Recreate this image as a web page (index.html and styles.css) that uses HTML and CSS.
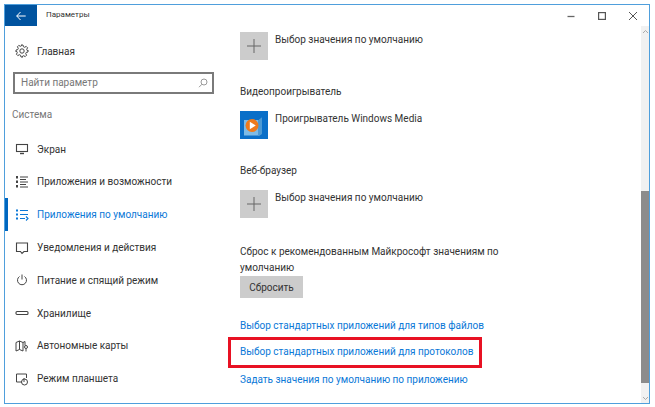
FILE: index.html
```html
<!DOCTYPE html>
<html lang="ru">
<head>
  <meta charset="UTF-8">
  <title>Параметры</title>
  <link rel="stylesheet" href="styles.css">
</head>
<body>
  <div class="window">
    <header class="titlebar">
      <div class="back-btn">
        <svg width="10" height="10" viewBox="0 0 10 10" fill="none" stroke="#fff" stroke-width="1"><path d="M4.500 1 .7 5l3.800 4M.7 5h9"/></svg>
      </div>
      <div class="title">Параметры</div>
      <div class="win-controls">
        <svg width="10" height="10" viewBox="0 0 10 10" stroke="#666" fill="none" stroke-width="1.300"><path d="M1.500 5.500h7"/></svg>
        <svg width="10" height="10" viewBox="0 0 10 10" stroke="#555" fill="none" stroke-width="1.200"><rect x="1.600" y="1.600" width="6.800" height="6.800"/></svg>
        <svg width="10" height="10" viewBox="0 0 10 10" stroke="#555" fill="none" stroke-width="1"><path d="M1 1l8 8M9 1 1 9"/></svg>
      </div>
    </header>

    <div class="body-row">
      <aside class="sidebar">
        <div class="nav-item home">
          <svg class="nav-icon" viewBox="0 0 14 14" fill="none" stroke="#444" stroke-width="1"><circle cx="7" cy="7" r="2.200"/><path d="M6 1h2l.4 1.700 1.300.6 1.500-.9 1.400 1.400-.9 1.500.6 1.300L13 6v2l-1.700.4-.6 1.300.9 1.500-1.400 1.400-1.500-.9-1.300.6L8 13H6l-.4-1.700-1.300-.6-1.500.9-1.400-1.400.9-1.500-.6-1.300L1 8V6l1.700-.4.6-1.300-.9-1.500 1.400-1.400 1.500.9 1.300-.6z"/></svg>
          <span>Главная</span>
        </div>
        <div class="search">
          <span>Найти параметр</span>
          <svg width="10" height="10" viewBox="0 0 10 10" fill="none" stroke="#999" stroke-width="1"><circle cx="6" cy="4" r="3"/><path d="M4 6.200 1 9.200"/></svg>
        </div>
        <div class="section-label">Система</div>
        <nav class="nav-list">
          <div class="nav-item">
            <svg class="nav-icon" viewBox="0 0 14 14" fill="none" stroke="#444" stroke-width="1.100"><rect x="1.500" y="2.500" width="11" height="7"/><path d="M5 11.500h4" stroke-width="1.400"/></svg>
            <span>Экран</span>
          </div>
          <div class="nav-item">
            <svg class="nav-icon" viewBox="0 0 14 14" fill="none" stroke="#444" stroke-width="1.100"><path d="M2 1v2.500M2 5.500V8M2 10v2.500" stroke-width="2"/><path d="M5 2h8M5 4.500h6M5 7h8M5 9.500h6M5 12h8"/></svg>
            <span>Приложения и возможности</span>
          </div>
          <div class="nav-item active">
            <svg class="nav-icon" viewBox="0 0 14 14" fill="none" stroke="#0a78d7" stroke-width="1.100"><path d="M1 2.500h2M1 6.500h2M1 10.500h2" stroke-width="2"/><path d="M5 2.500h8M5 6.500h8M5 10.500h5M11 8.500l2 2-2 2"/></svg>
            <span>Приложения по умолчанию</span>
          </div>
          <div class="nav-item">
            <svg class="nav-icon" viewBox="0 0 14 14" fill="none" stroke="#444" stroke-width="1.100"><path d="M1.500 2h11v8.500H9L7 12.500 5.500 10.500H1.500z"/></svg>
            <span>Уведомления и действия</span>
          </div>
          <div class="nav-item">
            <svg class="nav-icon" viewBox="0 0 14 14" fill="none" stroke="#444" stroke-width="1"><path d="M7 1.500v5M4.500 3.500a4.500 4.500 0 1 0 5 0"/></svg>
            <span>Питание и спящий режим</span>
          </div>
          <div class="nav-item">
            <svg class="nav-icon" viewBox="0 0 14 14" fill="none" stroke="#444" stroke-width="1.100"><rect x="1" y="5.500" width="12" height="3" rx="1"/></svg>
            <span>Хранилище</span>
          </div>
          <div class="nav-item">
            <svg class="nav-icon" viewBox="0 0 14 14" fill="none" stroke="#444" stroke-width="1"><path d="M1 3.500 4.500 2 8 3.500l2-1v4M1 3.500V12l3.500-1.500L8 12M4.500 2v8.500M8 3.500V12"/><circle cx="11" cy="8" r="1.500"/><path d="M11 10v2.500"/></svg>
            <span>Автономные карты</span>
          </div>
          <div class="nav-item">
            <svg class="nav-icon" viewBox="0 0 14 14" fill="none" stroke="#444" stroke-width="1"><path d="M7 10H1.500V2h10v4"/><circle cx="9.500" cy="10" r="3"/><path d="M9 6v4"/></svg>
            <span>Режим планшета</span>
          </div>
        </nav>
      </aside>

      <main class="content">
        <div class="app-row first">
          <div class="app-tile plus"><svg width="14" height="14" viewBox="0 0 14 14" stroke="#666" stroke-width="1"><path d="M7 0v14M0 7h14"/></svg></div>
          <span>Выбор значения по умолчанию</span>
        </div>

        <h3 class="group-title">Видеопроигрыватель</h3>
        <div class="app-row">
          <div class="app-tile media">
            <svg width="28" height="28" viewBox="0 0 28 28"><path d="M4 9h15l3-2.500v16l-3 2H4z" fill="#7dbbe6"/><path d="M19 9h-1v16h1l3-2V6.500z" fill="#4d9ad4"/><circle cx="12" cy="14.500" r="6.500" fill="#ee7a1c"/><path d="M9.800 10.800v7.400l6-3.700z" fill="#fff"/></svg>
          </div>
          <span>Проигрыватель Windows Media</span>
        </div>

        <h3 class="group-title">Веб-браузер</h3>
        <div class="app-row">
          <div class="app-tile plus"><svg width="14" height="14" viewBox="0 0 14 14" stroke="#666" stroke-width="1"><path d="M7 0v14M0 7h14"/></svg></div>
          <span>Выбор значения по умолчанию</span>
        </div>

        <p class="reset-text">Сброс к рекомендованным Майкрософт значениям по умолчанию</p>
        <button class="reset-btn">Сбросить</button>

        <a class="link first-link">Выбор стандартных приложений для типов файлов</a>
        <a class="link boxed">Выбор стандартных приложений для протоколов</a>
        <a class="link last-link">Задать значения по умолчанию по приложению</a>
      </main>

      <div class="scrollbar">
        <svg class="arrow" width="7" height="5" viewBox="0 0 7 5" fill="none" stroke="#aaa"><path d="M1 4l2.500-2.500L6 4"/></svg>
        <div class="track-gap"></div>
        <div class="thumb"></div>
        <svg class="arrow bottom" width="7" height="5" viewBox="0 0 7 5" fill="none" stroke="#aaa"><path d="M1 1l2.500 2.500L6 1"/></svg>
      </div>
    </div>
  </div>
</body>
</html>
```

FILE: styles.css
```css
* {
  margin: 0;
  padding: 0;
  box-sizing: border-box;
}

body {
  width: 655px;
  height: 407px;
  background-color: #fff;
  font-family: Roboto, "Open Sans", sans-serif;
  font-size: 10px;
  color: #333;
  overflow: hidden;
}

.window {
  width: 646px;
  height: 400px;
  margin: 4px 0 0 4px;
  border: 1px solid #4f9fdc;
  display: flex;
  flex-direction: column;
}

.titlebar {
  height: 21px;
  display: flex;
  align-items: center;
  flex-shrink: 0;
}

.back-btn {
  width: 32px;
  height: 21px;
  background-color: #00539f;
  display: flex;
  align-items: center;
  justify-content: center;
}

.title {
  margin-left: 9px;
  font-size: 8px;
  margin-top: -2px;
}

.win-controls {
  margin-left: auto;
  margin-right: 11px;
  display: flex;
  gap: 21px;
}

.body-row {
  flex: 1;
  display: flex;
  min-height: 0;
}

.sidebar {
  width: 234px;
  flex-shrink: 0;
}

.nav-item {
  height: 32.8px;
  display: flex;
  align-items: center;
  padding-left: 10px;
  color: #333;
}

.nav-item span {
  margin-left: 8px;
}

.nav-icon {
  width: 14px;
  height: 14px;
  flex-shrink: 0;
}

.nav-item.home {
  margin-top: 9px;
}

.nav-item.active {
  color: #0a78d7;
  box-shadow: inset 3px 0 0 #0067c0;
}

.search {
  width: 201px;
  height: 22px;
  margin: 4px 0 0 8px;
  border: 2px solid #7a7a7a;
  display: flex;
  align-items: center;
  justify-content: space-between;
  padding: 0 4px 0 6px;
  color: #777;
}

.section-label {
  margin: 15px 0 0 7px;
  height: 16px;
  color: #777;
}

.nav-list {
  margin-top: 8px;
}

.content {
  flex: 1;
  padding: 6px 0 0 1px;
  min-width: 0;
}

.app-row {
  display: flex;
  align-items: flex-start;
  height: 28px;
}

.app-row span {
  margin-left: 7px;
  line-height: 16px;
}

.app-tile {
  width: 28px;
  height: 28px;
  display: flex;
  align-items: center;
  justify-content: center;
  flex-shrink: 0;
}

.app-tile.plus {
  background-color: #ccc;
}

.app-tile.media {
  background-color: #0a6fc8;
}

.group-title {
  font-weight: normal;
  font-size: inherit;
  margin-top: 24px;
  margin-bottom: 12px;
  line-height: 15px;
}

.reset-text {
  margin-top: 26px;
  width: 300px;
  line-height: 16px;
}

.reset-btn {
  display: block;
  width: 63px;
  height: 22px;
  border: none;
  background-color: #ccc;
  font: inherit;
  color: #333;
}

.link {
  display: block;
  color: #0a78d7;
  line-height: 16px;
  white-space: nowrap;
}

.first-link {
  margin-top: 20px;
}

.boxed {
  width: 254px;
  height: 31px;
  margin: 3px 0 0 -12px;
  padding: 4px 0 0 9px;
  border: 3px solid #e81123;
}

.last-link {
  margin-top: 4px;
}

.scrollbar {
  width: 8px;
  background-color: #f1f1f1;
  display: flex;
  flex-direction: column;
  align-items: center;
  flex-shrink: 0;
}

.arrow {
  margin-top: 3px;
}

.track-gap {
  height: 157px;
}

.thumb {
  width: 100%;
  height: 192px;
  background-color: #8c8c8c;
}

.arrow.bottom {
  margin-top: auto;
  margin-bottom: 2px;
}
```
